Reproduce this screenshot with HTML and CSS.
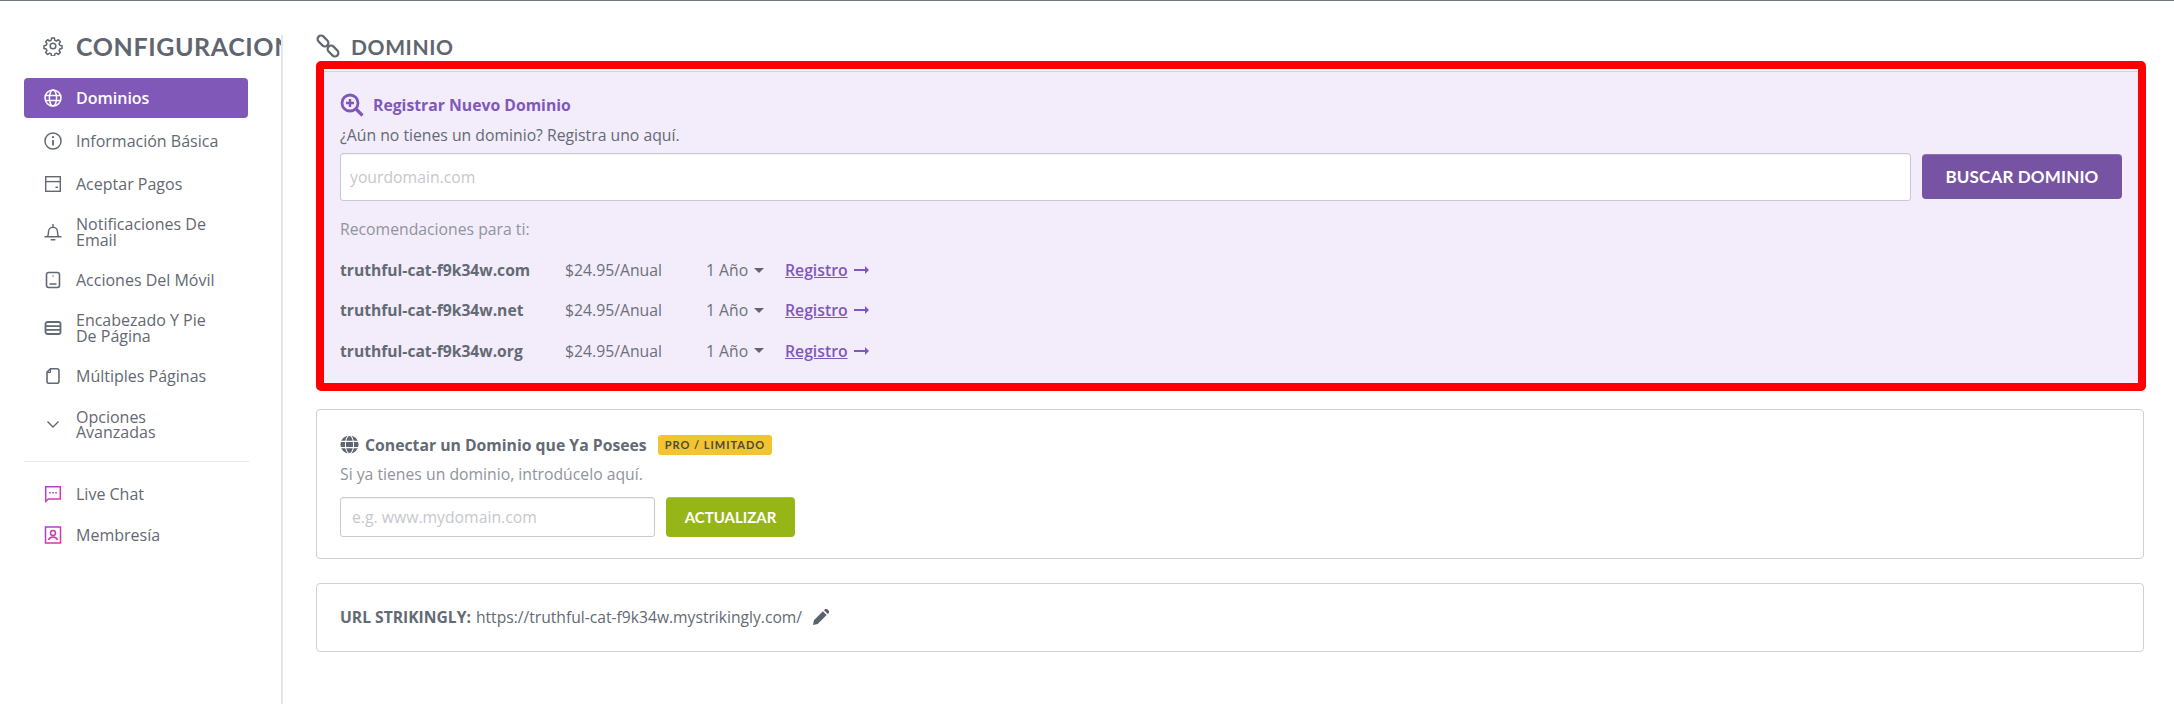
FILE: index.html
```html
<!DOCTYPE html>
<html lang="es">
<head>
<meta charset="utf-8">
<title>Configuracion - Dominio</title>
<link rel="stylesheet" href="styles.css">
</head>
<body>
<svg class="defs" width="0" height="0" aria-hidden="true"><defs>
<linearGradient id="pink" x1="0" y1="0" x2="1" y2="1"><stop offset="0" stop-color="#a542d6"/><stop offset="1" stop-color="#ec2fa5"/></linearGradient>
</defs></svg>
<div class="app">
  <aside class="sidebar">
    <div class="side-head">
      <svg class="gear" viewBox="0 0 24 24" fill="none" stroke="#5f6670" stroke-width="1.8"><circle cx="12" cy="12" r="3.4"/><path d="M10.3 2.5h3.4l.5 2.7 1.900.8 2.300-1.500 2.400 2.400-1.500 2.300.8 1.900 2.700.5v3.400l-2.700.5-.8 1.900 1.500 2.300-2.400 2.400-2.300-1.500-1.900.8-.5 2.700h-3.400l-.5-2.700-1.900-.8-2.300 1.500-2.400-2.400 1.500-2.300-.8-1.900-2.700-.5v-3.400l2.700-.5.8-1.900-1.500-2.300 2.400-2.400 2.300 1.500 1.900-.8z" stroke-linejoin="round"/></svg>
      <span class="side-title">CONFIGURACION</span>
    </div>
    <nav class="nav">
      <a class="nav-item active"><svg class="ico" viewBox="0 0 18 18" fill="none" stroke="currentColor" stroke-width="1.5"><circle cx="9" cy="9" r="8"/><ellipse cx="9" cy="9" rx="3.6" ry="8"/><path d="M1.4 6.5h15.2M1.4 11.5h15.2"/></svg><span>Dominios</span></a>
      <a class="nav-item"><svg class="ico" viewBox="0 0 18 18" fill="none" stroke="currentColor" stroke-width="1.5"><circle cx="9" cy="9" r="8"/><path d="M9 8v5.4" stroke-width="1.8"/><circle cx="9" cy="5.2" r="1.1" fill="currentColor" stroke="none"/></svg><span>Información Básica</span></a>
      <a class="nav-item"><svg class="ico" viewBox="0 0 18 18" fill="none" stroke="currentColor" stroke-width="1.4"><rect x="1.7" y="1.7" width="14.6" height="14.6"/><path d="M1.7 6.6h14.6"/><path d="M11.5 12.3h2.4" stroke-width="1.6"/></svg><span>Aceptar Pagos</span></a>
      <a class="nav-item"><svg class="ico" viewBox="0 0 18 18" fill="none" stroke="currentColor" stroke-width="1.4"><path d="M.5 13.700h17M3 13.700c1.500-1 1.500-3 1.500-5a4.500 4.500 0 0 1 9 0c0 2 0 4 1.500 5"/><path d="M6.700 16.800h4.600M9 1v3"/></svg><span>Notificaciones De Email</span></a>
      <a class="nav-item"><svg class="ico" viewBox="0 0 18 18" fill="none" stroke="currentColor" stroke-width="1.6"><rect x="2.500" y="1.500" width="13" height="15" rx="2.200"/><path d="M5.500 13h7M9 4.400v1"/></svg><span>Acciones Del Móvil</span></a>
      <a class="nav-item"><svg class="ico" viewBox="0 0 18 18" fill="none" stroke="currentColor" stroke-width="1.800"><rect x="1.500" y="3" width="15" height="12" rx="2"/><path d="M1.500 7.200h15M1.500 10.800h15"/></svg><span>Encabezado Y Pie De Página</span></a>
      <a class="nav-item"><svg class="ico" viewBox="0 0 18 18" fill="none" stroke="currentColor" stroke-width="1.600"><path d="M6.500 1.700H13a2 2 0 0 1 2 2v10.600a2 2 0 0 1-2 2H5a2 2 0 0 1-2-2V5.200z"/><path d="M3 5.400h3.500V1.700" stroke-width="1.200"/></svg><span>Múltiples Páginas</span></a>
      <a class="nav-item is-tight"><svg class="ico" viewBox="0 0 18 18" fill="none" stroke="currentColor" stroke-width="1.400"><path d="M3.500 6.500 9 12l5.500-5.500"/></svg><span>Opciones Avanzadas</span></a>
    </nav>
    <hr class="nav-rule">
    <nav class="nav nav-extra">
      <a class="nav-item"><svg class="ico" viewBox="0 0 18 18" fill="none" stroke="url(#pink)" stroke-width="1.500"><path d="M1.700 1.700h14.600v12.300H4.500l-2.800 2.400z"/><path d="M5.200 7.800h1.600M8.200 7.800h1.600M11.200 7.800h1.600" stroke="#a93fd0"/></svg><span>Live Chat</span></a>
      <a class="nav-item"><svg class="ico" viewBox="0 0 18 18" fill="none" stroke="url(#pink)" stroke-width="1.500"><rect x="1.500" y="1" width="15" height="16"/><circle cx="9" cy="7" r="2.500" stroke="#c93ab8"/><path d="M4.500 14c.8-2.200 2.400-3 4.500-3s3.700.8 4.500 3" stroke="#d835b0"/></svg><span>Membresía</span></a>
    </nav>
  </aside>

  <main class="main">
    <h1 class="page-title">
      <svg class="link-ico" viewBox="0 0 24 24" fill="none" stroke="#5f6670" stroke-width="2.200"><rect x="-6.200" y="-3.500" width="12.400" height="7" rx="3.500" transform="translate(7 7) rotate(45)"/><rect x="-6.200" y="-3.500" width="12.400" height="7" rx="3.500" transform="translate(17 17) rotate(45)"/></svg>
      <span>DOMINIO</span>
    </h1>

    <section class="register-frame">
      <div class="register">
        <div class="reg-head">
          <svg class="zoom-ico" viewBox="0 0 24 24" fill="none" stroke="#8058bc" stroke-width="2.800"><circle cx="10" cy="10" r="8"/><path d="M16 16l6.500 6.500" stroke-width="3.200"/><path d="M10 6v8M6 10h8" stroke-width="2.400"/></svg>
          <span>Registrar Nuevo Dominio</span>
        </div>
        <p class="reg-sub">¿Aún no tienes un dominio? Registra uno aquí.</p>
        <div class="search-row">
          <input class="field field-wide" placeholder="yourdomain.com">
          <button class="btn-search">BUSCAR DOMINIO</button>
        </div>
        <p class="rec-label">Recomendaciones para ti:</p>
        <ul class="rec-list">
          <li class="rec"><b class="rec-name">truthful-cat-f9k34w.com</b><span class="rec-price">$24.95/Anual</span><span class="rec-term">1 Año<i class="caret"></i></span><a class="rec-link"><u>Registro</u><svg class="arrow" viewBox="0 0 15 10" fill="#8058bc"><path d="M0 4h11V1l4 4-4 4V6H0z"/></svg></a></li>
          <li class="rec"><b class="rec-name">truthful-cat-f9k34w.net</b><span class="rec-price">$24.95/Anual</span><span class="rec-term">1 Año<i class="caret"></i></span><a class="rec-link"><u>Registro</u><svg class="arrow" viewBox="0 0 15 10" fill="#8058bc"><path d="M0 4h11V1l4 4-4 4V6H0z"/></svg></a></li>
          <li class="rec"><b class="rec-name">truthful-cat-f9k34w.org</b><span class="rec-price">$24.95/Anual</span><span class="rec-term">1 Año<i class="caret"></i></span><a class="rec-link"><u>Registro</u><svg class="arrow" viewBox="0 0 15 10" fill="#8058bc"><path d="M0 4h11V1l4 4-4 4V6H0z"/></svg></a></li>
        </ul>
      </div>
    </section>

    <section class="card card-connect">
      <div class="connect-head">
        <svg class="globe" viewBox="0 0 20 20"><circle cx="10" cy="10" r="9.500" fill="#5f6670"/><g fill="none" stroke="#fff" stroke-width="1.100"><ellipse cx="10" cy="10" rx="4.300" ry="9.500"/><path d="M.8 6.700h18.400M.8 13.300h18.400"/></g></svg>
        <span class="connect-title">Conectar un Dominio que Ya Posees</span>
        <span class="badge">PRO / LIMITADO</span>
      </div>
      <p class="connect-sub">Si ya tienes un dominio, introdúcelo aquí.</p>
      <div class="connect-row">
        <input class="field field-small" placeholder="e.g. www.mydomain.com">
        <button class="btn-update">ACTUALIZAR</button>
      </div>
    </section>

    <section class="card card-url">
      <b>URL STRIKINGLY:</b>
      <span class="url-text">https://truthful-cat-f9k34w.mystrikingly.com/</span>
      <svg class="pencil" viewBox="0 0 17 17" fill="#5a626c"><path d="M0 17l1-5L10.500 2.500l4 4L5 16zM11.700 1.300 13 0a1.400 1.400 0 0 1 2 0l2 2a1.400 1.400 0 0 1 0 2l-1.300 1.300z"/></svg>
    </section>
  </main>
</div>
</body>
</html>
```

FILE: styles.css
```css
* { box-sizing: border-box; }
html, body { margin: 0; height: 100%; }
body {
  background: #fff;
  color: #636a74;
  font-family: "Open Sans", "Liberation Sans", sans-serif;
  font-size: 15.75px;
  border-top: 1px solid #6b7b80;
  overflow: hidden;
}
.defs { position: absolute; }
p { margin: 0; }
.app { display: flex; height: 703px; padding-top: 34px; }

.sidebar {
  width: 283px;
  flex: none;
  padding-left: 24px;
  border-right: 2px solid #e4e6e9;
  overflow: hidden;
}
.side-head { display: flex; align-items: center; height: 22px; padding-left: 19px; margin-bottom: 21px; white-space: nowrap; }
.gear { width: 20px; height: 20px; flex: none; margin-right: 13px; }
.side-title { font-family: Lato, sans-serif; font-weight: 700; font-size: 25px; line-height: 22px; letter-spacing: .6px; color: #5f6670; }

.nav { width: 224px; display: flex; flex-direction: column; gap: 3px; }
.nav-item {
  display: flex;
  align-items: center;
  min-height: 40px;
  padding: 9px 24px 9px 20px;
  border-radius: 4px;
  font-size: 16px;
  font-weight: 500;
  line-height: 16px;
  color: #636972;
}
.nav-item.active { background: #8058b8; color: #fff; font-weight: 600; }
.is-tight { line-height: 15px; }
.is-tight span { padding-top: 2px; }
.ico { width: 18px; height: 18px; flex: none; margin-right: 14px; color: #636972; }
.active .ico { color: #fff; }
.nav-rule { width: 225px; height: 1px; margin: 12px 0 12px; border: 0; background: #e8e9eb; }
.nav-extra { gap: 1px; }

.main { flex: 1; padding: 0 28px 0 33px; min-width: 0; }
.page-title {
  display: flex;
  align-items: center;
  height: 22px;
  margin: 0;
  font-family: Lato, sans-serif;
  font-weight: 700;
  font-size: 21px;
  letter-spacing: .6px;
  color: #5f6670;
}
.link-ico { width: 24px; height: 24px; margin-right: 11px; }

.register-frame { margin-top: 4px; border: 8px solid #f00; border-radius: 5px; }
.register {
  margin-top: 2px;
  padding: 21px 16px 12px;
  background: #f3ecfb;
  border-top: 1px solid #d8cdea;
}
.reg-head { display: flex; align-items: center; height: 24px; color: #8058bc; font-weight: 700; font-size: 15.75px; }
.zoom-ico { width: 24px; height: 24px; margin-right: 9px; }
.reg-sub { margin-top: 8px; line-height: 20px; }
.search-row { display: flex; align-items: flex-start; gap: 11px; margin-top: 8px; }
.field {
  height: 48px;
  padding: 0 9px;
  border: 1px solid #c9cad0;
  border-radius: 3px;
  background: #fff;
  box-shadow: inset 0 1px 1px rgba(0, 0, 0, .05);
  font: 400 15.75px "Open Sans", sans-serif;
  color: #5f6670;
  outline: 0;
}
.field::placeholder { color: #c6c8cd; opacity: 1; }
.field-wide { flex: 1; min-width: 0; }
.btn-search {
  width: 200px;
  height: 45px;
  flex: none;
  margin-top: 1px;
  border: 0;
  border-radius: 4px;
  background: #7753a3;
  box-shadow: inset 0 1px 0 rgba(255, 255, 255, .18);
  color: #fff;
  font: 700 17px Lato, sans-serif;
  letter-spacing: .15px;
}
.rec-label { margin-top: 18px; color: #8f949d; line-height: 20px; }
.rec-list { list-style: none; margin: 11px 0 0; padding: 0; }
.rec { display: flex; align-items: center; height: 40.333px; }
.rec-name { width: 225px; font-weight: 700; font-size: 15.65px; }
.rec-price { width: 141px; color: #6b717a; }
.rec-term { width: 79px; display: flex; align-items: center; color: #6b717a; }
.caret { width: 0; height: 0; margin-left: 6px; border: 5px solid transparent; border-top-color: #5f6670; border-bottom: 0; }
.rec-link { display: flex; align-items: center; color: #8058bc; font-weight: 600; }
.arrow { width: 15px; height: 10px; margin-left: 6px; }

.card { margin-right: 2px; border: 1px solid #cfd1d4; border-radius: 4px; background: #fff; }
.card-connect { height: 150px; margin-top: 18px; padding: 25px 23px 0; }
.connect-head { display: flex; align-items: center; height: 20px; }
.globe { width: 19px; height: 19px; margin-right: 6px; }
.connect-title { font-weight: 700; font-size: 15.75px; }
.badge {
  height: 20px;
  margin-left: 11px;
  padding: 0 7px;
  border-radius: 3px;
  background: #f4c430;
  color: #4a4a3a;
  font: 700 11px/20px Lato, sans-serif;
  letter-spacing: 1px;
}
.connect-sub { margin-top: 9px; color: #8f949d; line-height: 20px; }
.connect-row { display: flex; gap: 11px; margin-top: 13px; }
.field-small { width: 315px; height: 40px; padding: 0 11px; }
.btn-update {
  width: 129px;
  height: 40px;
  border: 0;
  border-radius: 4px;
  background: #96b618;
  box-shadow: inset 0 1px 0 rgba(255, 255, 255, .18);
  color: #fff;
  font: 700 15px Lato, sans-serif;
}
.card-url { display: flex; align-items: center; height: 69px; margin-top: 24px; padding: 0 23px; font-size: 15.65px; }
.url-text { margin-left: 5px; }
.pencil { width: 16px; height: 16px; margin-left: 11px; }
```
